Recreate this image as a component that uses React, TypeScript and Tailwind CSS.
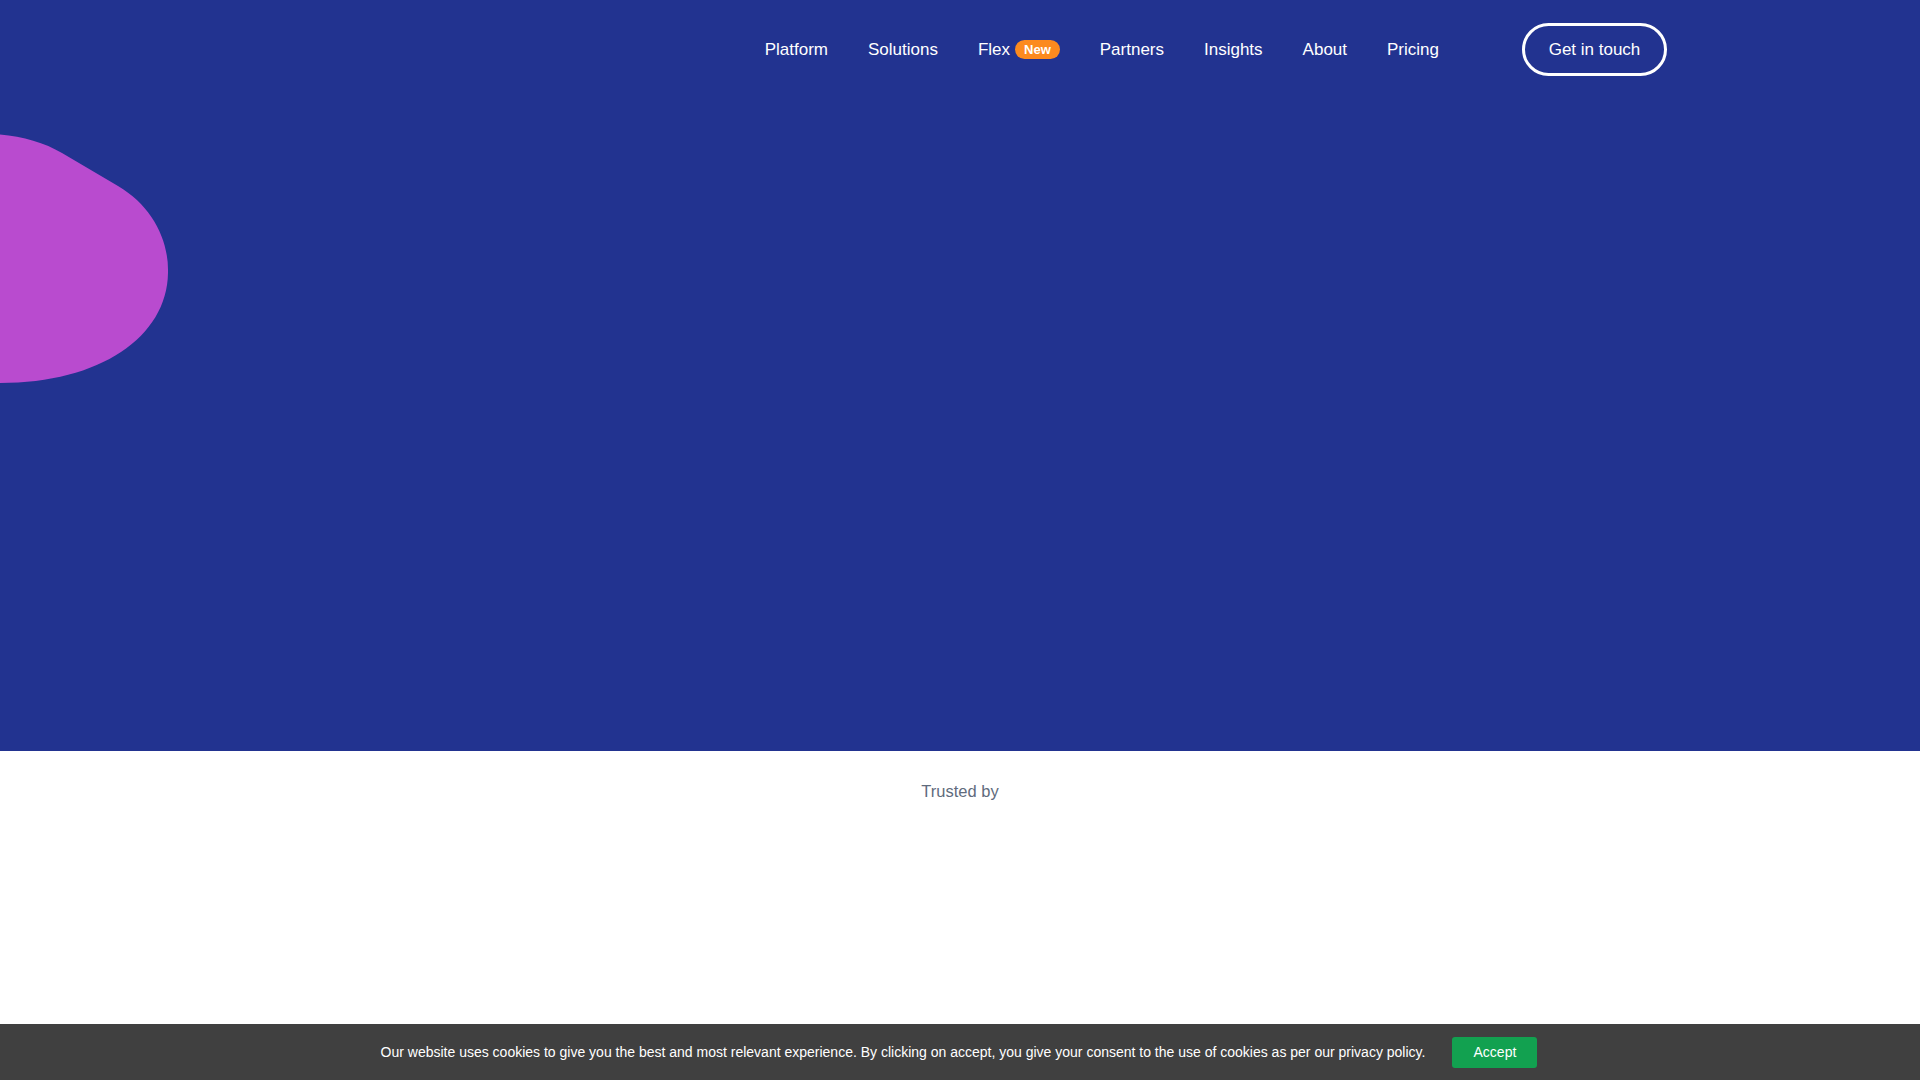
const navItems = ['Platform', 'Solutions', 'Flex', 'Partners', 'Insights', 'About', 'Pricing'];

function Blob() {
  return (
    <svg
      className="absolute left-0 top-0 pointer-events-none"
      width="200"
      height="400"
      viewBox="0 0 200 400"
      aria-hidden="true"
    >
      <path
        d="M-20,134 C10,133 40,140 62,153 L118,186 C152,206 169,240 168,273 C167,337 100,383 0,383 L-20,383 Z"
        fill="#b94bcf"
      />
    </svg>
  );
}

export default function App() {
  return (
    <div className="min-h-screen bg-white font-['Liberation_Sans',Arial,sans-serif]">
      {/* Hero */}
      <section className="relative h-[751px] overflow-hidden bg-[#223390]">
        <Blob />
        <header className="relative h-[99px]">
          <div className="mx-auto flex h-full w-[1414px] items-center justify-end">
            <nav className="flex items-center gap-[40px] text-[17px] text-white">
              {navItems.map(item => (
                <a key={item} href="#" className="flex items-center leading-none">
                  {item}
                  {item === 'Flex' && (
                    <span className="ml-[5px] flex h-[19px] items-center rounded-full bg-[#fc8a1e] px-[9px] text-[13px] font-bold">
                      New
                    </span>
                  )}
                </a>
              ))}
            </nav>
            <a
              href="#"
              className="ml-[83px] flex h-[53px] w-[145px] items-center justify-center rounded-full border-[3px] border-white text-[17px] text-white"
            >
              Get in touch
            </a>
          </div>
        </header>
      </section>

      {/* Trusted by */}
      <section className="pt-[28px] text-center">
        <p className="text-[16.5px] leading-6 text-[#5f6b7d]">Trusted by</p>
      </section>

      {/* Cookie bar */}
      <div className="fixed inset-x-0 bottom-0 flex h-[56px] items-center justify-center gap-[27px] bg-[#404040] pr-[2px] text-[14px] text-white">
        <p>
          Our website uses cookies to give you the best and most relevant experience. By clicking on accept, you give your consent to the use of cookies as per our privacy policy.
        </p>
        <button type="button" className="h-[31px] w-[85px] rounded-[3px] bg-[#12a150] text-white">
          Accept
        </button>
      </div>
    </div>
  );
}
